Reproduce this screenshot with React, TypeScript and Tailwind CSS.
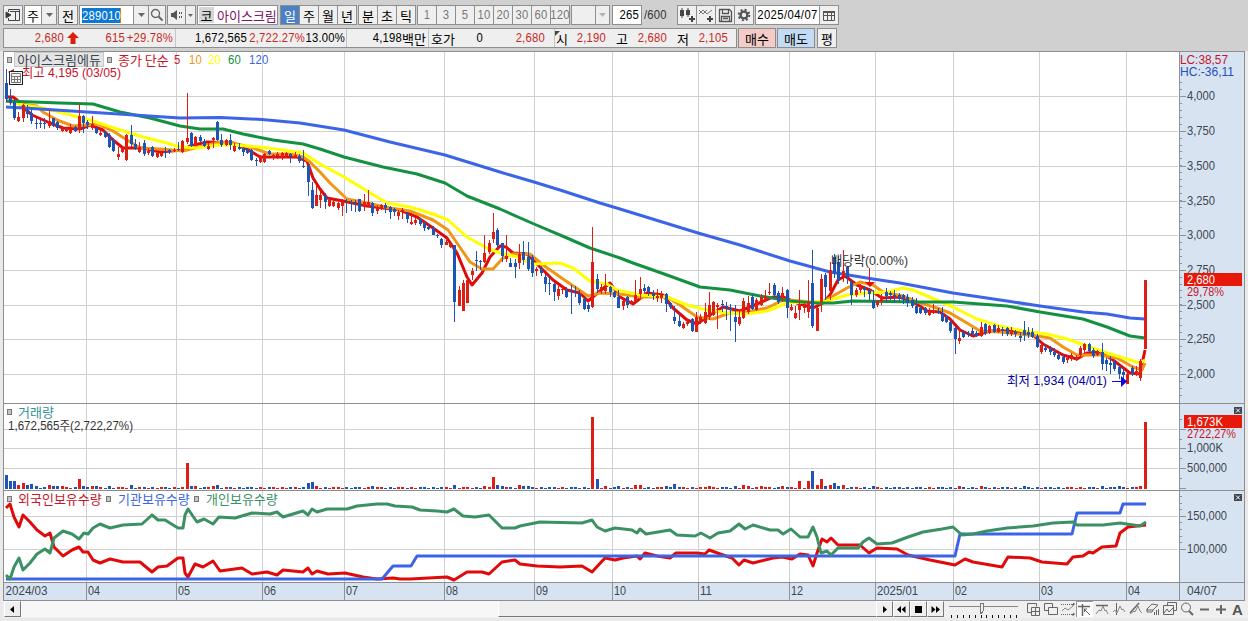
import type { ReactNode } from "react";

const UP = "#dc1e14";
const DOWN = "#1e55b4";

// one entry per trading day: direction, high, body top, body bottom, low (plot pixels)
const CANDLES = `
d69,83,99,102 d89,98,103,105 d100,102,118,120 u112,117,121,122 u104,105,118,122 d105,110,114,118 d110,113,121,124 d118,123,124,129
d120,123,124,128 d118,123,124,129 u110,121,126,128 d118,118,126,127 d121,122,128,130 u126,129,131,132 u127,128,131,132 u124,129,133,134
d126,127,131,132 u104,116,130,133 d115,116,123,133 d120,122,125,129 u116,124,128,130 d127,128,133,134 u130,133,135,136 d131,132,137,138
d133,135,147,148 d138,140,151,152 u147,154,157,160 u147,148,152,153 u134,135,160,161 d125,135,144,147 d139,144,149,150 u142,147,152,153
d140,143,154,156 u148,151,153,155 d146,147,156,157 u152,153,157,158 u151,153,156,157 d147,152,153,158 d149,150,152,154 u148,150,151,152
d142,149,150,151 u140,141,152,153 u93,138,142,144 d132,133,146,147 u136,137,145,146 d135,137,141,143 d139,141,146,147 u143,146,149,150
u137,138,140,148 d121,122,140,141 d134,140,145,147 u139,140,145,146 d134,140,145,150 u143,146,151,152 d143,147,149,150 d147,148,152,156
d148,149,153,154 d149,150,160,161 d158,160,161,166 u155,156,162,163 u153,154,162,163 d150,151,154,155 u154,155,158,160 u152,154,156,159
u152,153,158,160 u152,153,156,158 d153,154,156,163 u152,155,157,158 d154,156,161,163 d150,166,167,168 d163,166,182,196 d182,190,208,209
u186,195,206,206 u190,195,200,208 d193,196,202,209 u198,200,206,207 u200,202,206,207 u202,203,208,210 u199,202,206,216 d199,201,202,213
d200,202,203,211 d200,202,203,212 d199,199,211,212 u194,202,206,211 u190,202,206,207 d202,203,213,216 u205,207,211,214 u204,205,209,210
d203,205,208,213 d206,207,212,219 d208,209,212,216 u210,212,216,220 u208,210,212,219 d212,213,219,223 u213,222,224,225 u218,220,223,225
d218,219,224,226 d222,223,228,231 d225,227,229,230 d226,228,235,235 d234,235,236,238 d238,239,245,248 u240,242,245,245 u241,243,247,248
d245,245,302,322 u286,290,306,306 u280,283,311,311 u278,280,303,303 u268,271,275,280 d251,260,261,271 d260,261,262,270 u235,253,262,263
u240,243,252,254 u213,232,239,243 d228,230,245,248 d243,243,256,262 u235,256,259,262 d258,263,267,267 d259,263,267,278 u244,254,263,269
d241,252,260,265 d242,257,269,271 d255,257,273,277 u267,269,271,276 d266,269,273,276 d274,277,284,292 d276,283,284,295 d283,284,292,301
u286,289,296,300 u285,289,290,294 d287,290,297,298 d285,291,292,314 d286,291,292,297 d290,294,303,305 d297,299,309,310 d303,305,309,312
u227,262,307,308 d274,279,289,293 u284,287,290,294 u274,288,291,294 d286,287,292,297 d291,292,297,298 d290,297,308,308 u300,301,306,310
d296,297,305,308 u300,301,303,304 u280,295,302,303 u277,289,294,298 d284,288,291,293 d286,287,292,296 d290,293,296,300 u289,296,298,302
u291,295,298,303 d293,294,304,312 d302,303,307,309 d306,317,321,324 d313,321,326,327 u322,324,328,329 u320,322,324,326 d318,319,331,332
u312,317,332,332 u314,317,322,324 u303,312,323,324 u292,305,317,320 u301,302,315,316 u303,305,307,329 d300,304,305,312 d302,306,308,320
d304,308,310,331 d305,317,322,342 u310,317,324,326 u298,301,318,319 u296,303,312,314 d295,297,309,310 u298,300,310,311 u294,297,305,306
u290,296,301,302 u283,292,293,295 d283,285,295,298 d291,293,302,304 u287,293,298,302 d289,290,308,318 u304,307,310,311 u306,313,318,319
u290,304,310,320 u303,306,308,313 u280,302,312,318 d250,283,326,328 u307,308,331,331 u274,279,302,312 d273,275,287,300 u262,270,291,300
d254,257,273,278 d256,262,281,284 u250,271,276,282 d266,267,277,284 d280,282,295,305 u288,290,295,297 u284,285,290,293 d286,288,290,297
d288,290,294,300 d290,301,308,309 u300,301,305,307 u294,296,302,305 d288,292,296,302 d291,293,295,300 d290,295,296,303 d293,295,299,301
d294,295,299,304 d294,297,303,307 d297,300,306,308 d298,306,313,314 d306,308,313,314 d307,308,313,315 u308,311,315,316 u304,310,313,314
d308,311,313,314 d307,313,321,322 d315,317,322,323 d320,322,331,333 d327,328,339,354 u328,338,341,344 d330,332,337,338 d331,333,335,337
d328,331,334,336 d331,333,336,337 u322,327,336,337 d323,324,333,335 u325,326,333,334 d324,325,332,333 u325,328,332,333 d327,329,331,336
d327,328,334,336 u327,330,334,336 d330,332,334,337 d332,336,338,342 d321,330,335,341 d327,332,335,338 d328,332,337,338 d334,336,347,348
u344,345,352,354 d344,348,350,352 d346,349,352,355 d348,352,355,357 d353,355,359,360 d355,357,362,364 u355,358,360,363 u353,355,359,361
u355,357,360,361 u346,348,355,357 u343,344,350,354 d343,344,351,352 d348,350,356,358 u350,351,355,356 d343,352,364,370 d358,360,364,371
d356,363,365,374 d360,362,369,371 d365,367,374,379 d368,372,375,384 u370,374,384,384 d366,368,373,376 u366,371,375,376 u359,361,378,381
u280,280,349,349`
  .trim()
  .split(/\s+/)
  .map((entry) => {
    const [high, top, bottom, low] = entry.slice(1).split(",").map(Number);
    return { color: entry[0] === "u" ? UP : DOWN, high, top, bottom, low };
  });

const VOLUME: Record<number, number> = {
  0: 14, 1: 8, 2: 8, 3: 4, 4: 6, 5: 4, 6: 5, 7: 3, 10: 4, 11: 3, 12: 3, 13: 3, 17: 10, 18: 3, 20: 3, 21: 3, 24: 3, 29: 4,
  42: 26, 43: 3, 44: 3, 48: 3, 49: 4, 70: 6, 71: 7, 72: 3, 85: 3, 104: 4, 111: 3, 113: 12, 114: 4, 115: 3, 119: 4, 120: 3,
  121: 3, 136: 72, 137: 10, 139: 3, 142: 3, 146: 4, 147: 4, 153: 3, 155: 5, 163: 3, 169: 3, 171: 4, 172: 3, 175: 3, 180: 3,
  184: 8, 186: 8, 187: 18, 188: 4, 189: 10, 190: 3, 191: 4, 192: 6, 193: 3, 194: 4, 201: 3, 221: 3, 226: 3, 236: 3, 254: 3,
  258: 3, 263: 3, 264: 67,
};

const MA5 =
  "6,98 8,97 13,97 17,100 24,108 32,115 50,123 63,128 80,129 90,125 103,130 113,140 123,148 143,148 160,152 183,150 190,146 207,142 233,143 247,149 260,157 277,157 297,157 307,161 313,178 320,189 327,198 343,201 367,206 400,210 417,217 433,228 447,238 457,253 467,277 472,285 482,273 490,257 500,246 506,247 513,253 527,254 540,267 553,280 567,290 580,293 588,301 600,291 610,283 620,297 633,304 647,293 663,295 673,308 687,320 697,324 710,315 723,307 740,311 757,304 773,297 783,297 797,303 813,308 823,303 830,295 838,280 845,276 857,285 870,290 882,298 900,297 917,304 927,311 940,312 950,319 960,330 973,336 990,331 1013,331 1033,335 1043,344 1063,355 1077,359 1087,353 1100,352 1113,360 1130,373 1140,374 1145,350";
const MA10 =
  "6,101 20,104 37,106 43,112 57,120 73,126 97,124 113,131 127,140 140,148 160,149 183,151 203,146 220,142 233,143 253,148 270,154 290,154 303,157 310,162 320,172 330,183 347,199 367,203 390,208 410,211 433,220 448,230 457,243 470,262 482,269 493,269 503,258 513,254 530,254 543,265 563,279 588,296 600,293 620,294 640,297 667,297 680,305 697,317 713,319 730,313 747,312 767,308 783,300 800,301 820,303 833,296 847,288 860,282 873,285 883,292 903,296 917,302 937,308 950,313 967,323 980,331 1000,332 1037,336 1050,338 1063,347 1077,355 1100,355 1117,358 1133,367 1142,370 1145,363";
const MA20 =
  "8,101 23,105 43,108 67,114 93,121 117,129 143,137 167,143 180,147 197,148 217,145 233,145 260,147 283,150 303,153 320,164 344,177 367,191 387,203 410,207 433,214 448,220 467,237 487,248 500,253 517,257 533,264 560,263 573,268 590,281 607,284 617,290 640,295 667,297 687,305 703,309 727,313 747,314 767,311 787,303 807,302 827,301 847,295 867,293 887,292 903,288 913,290 927,296 953,307 977,319 1000,326 1023,331 1047,334 1067,339 1087,346 1107,353 1127,359 1140,363 1145,360";
const MA60 =
  "6,101 33,102 60,103 93,104 120,112 150,118 180,126 200,129 223,129 243,134 273,140 303,144 320,149 344,157 383,167 417,174 445,183 467,196 500,209 534,224 567,238 590,248 620,258 633,263 667,275 700,287 730,290 760,296 790,301 817,303 833,303 853,301 920,302 953,302 1007,306 1040,312 1083,319 1107,327 1130,336 1145,338";
const MA120 =
  "6,107 40,109 87,112 134,115 180,118 220,117.5 262,119.5 300,123 344,130 390,142 445,155 500,172 534,182 560,190 600,203 620,209 698,233 740,245 790,261 830,272 873,279 900,283 953,293 1007,301 1040,306 1083,312 1107,314 1130,318 1145,319";

const FOREIGN =
  "6,508 10,504 14,517 19,527 23,515 30,522 37,530 45,536 50,533 54,547 63,556 72,550 79,547 83,552 88,552 93,560 100,563 110,559 123,562 140,562 152,572 158,567 167,566 178,558 183,558 185,573 188,577 195,564 203,567 213,561 220,571 242,568 252,574 267,572 277,575 283,570 303,572 308,568 312,574 317,571 328,574 345,573 363,577 377,579 393,578 400,579 410,579 447,577 454,580 467,572 482,572 489,574 502,562 515,560 520,564 537,566 560,567 582,566 592,572 605,558 615,560 623,558 637,556 640,559 645,553 657,556 670,558 676,553 697,553 705,554 709,550 723,555 732,558 739,565 744,560 753,563 773,558 782,557 792,559 800,554 808,555 813,566 817,553 822,539 827,542 831,538 838,545 860,545 869,553 877,548 897,549 908,555 930,560 955,565 965,559 973,562 1002,567 1008,557 1030,558 1042,562 1067,564 1073,557 1083,556 1089,552 1093,553 1102,547 1116,546 1120,533 1128,527 1146,525";
const INSTITUTION =
  "6,579 382,579 393,566 411,566 417,556 955,556 960,534 1072,534 1077,513 1120,513 1123,504 1146,504";
const PERSONAL =
  "6,575 10,579 14,567 19,558 23,570 30,563 37,554 45,549 50,553 54,538 63,531 72,534 79,539 84,533 88,534 93,528 100,524 110,528 123,525 142,524 152,515 158,520 165,520 178,528 183,528 185,515 188,509 197,522 204,519 213,524 219,517 235,518 252,513 270,514 277,512 283,517 303,511 308,515 312,509 317,512 327,509 347,509 357,506 377,504 387,504 395,506 412,507 420,510 437,511 447,512 454,509 463,516 475,517 489,515 502,528 515,528 520,526 530,524 540,522 582,523 592,520 597,527 605,531 615,528 632,530 637,533 640,529 646,534 670,530 677,535 695,536 701,533 710,538 718,533 730,531 739,524 745,529 753,525 770,530 778,530 783,534 791,529 800,537 808,537 813,527 817,537 821,553 827,551 831,555 838,548 858,548 863,542 869,538 877,544 892,543 908,537 923,532 942,529 953,527 962,535 973,534 987,531 1007,528 1033,526 1053,523 1073,522 1077,525 1103,525 1120,523 1140,526 1146,522";

const MONTHS: [number, string, number][] = [
  [4, "2024/03", 42],
  [86, "04", 12],
  [176, "05", 12],
  [262, "06", 12],
  [344, "07", 12],
  [444, "08", 12],
  [534, "09", 12],
  [612, "10", 12],
  [698, "11", 12],
  [789, "12", 12],
  [875, "2025/01", 41],
  [953, "02", 12],
  [1039, "03", 12],
  [1126, "04", 12],
];

const candleX = (i: number) => Math.floor(6 + i * 4.315);

function Label({ x, y, w, fill = "#3c4650", children }: { x: number; y: number; w: number; fill?: string; children: string }) {
  return (
    <text x={x} y={y} fill={fill} textLength={w} lengthAdjust="spacingAndGlyphs" className="font-['Liberation_Sans','Noto_Sans_CJK_KR',sans-serif] text-[13px]">
      {children}
    </text>
  );
}

function Line({ points, color }: { points: string; color: string }) {
  return <polyline points={points} fill="none" stroke={color} strokeWidth="3" strokeLinejoin="round" />;
}

function Grid({ top, bottom, rows }: { top: number; bottom: number; rows: number[] }) {
  return (
    <g fill="#d0d0d0" shapeRendering="crispEdges">
      {MONTHS.slice(1).map(([x]) => (
        <rect key={x} x={x} y={top} width="1" height={bottom - top} />
      ))}
      {rows.map((y) => (
        <rect key={y} x="4" y={y} width="1174" height="1" />
      ))}
    </g>
  );
}

function Ticks({ from, to, step, majors }: { from: number; to: number; step: number; majors: number[] }) {
  const minors: number[] = [];
  for (let y = from; y <= to; y += step) minors.push(Math.round(y));
  return (
    <g fill="#8b939b" shapeRendering="crispEdges">
      {minors.map((y) => (
        <rect key={y} x="1180" y={y} width="2" height="1" />
      ))}
      {majors.map((y) => (
        <rect key={y} x="1180" y={y} width="6" height="1" />
      ))}
    </g>
  );
}

function CloseMark({ y }: { y: number }) {
  return (
    <g>
      <rect x="1234" y={y} width="8" height="7" fill="#3f4650" />
      <path d={`M1236 ${y + 1.5}l4 4m0-4l-4 4`} stroke="#fff" strokeWidth="1" />
    </g>
  );
}

function Marker() {
  return <i className="block h-[6px] w-[5px] border border-[#777] bg-[#c4c4c4]" />;
}

function Ko({ className = "", children }: { className?: string; children: ReactNode }) {
  return <span className={`font-['Noto_Sans_CJK_KR',sans-serif] text-[13px] leading-none whitespace-nowrap ${className}`}>{children}</span>;
}

function Num({ className = "", children }: { className?: string; children: ReactNode }) {
  return (
    <span className={`scale-y-[1.15] font-['Liberation_Sans',sans-serif] text-[11.3px] leading-none tracking-[0.2px] whitespace-nowrap ${className}`}>{children}</span>
  );
}

function Cell({ className = "", children }: { className?: string; children?: ReactNode }) {
  return <div className={`flex h-5 shrink-0 items-center justify-center border border-[#8e8e8e] ${className}`}>{children}</div>;
}

function Caret({ className = "text-[#666]" }: { className?: string }) {
  return (
    <svg width="7" height="4" className={className}>
      <path d="M0 0h7L3.500 4z" fill="currentColor" />
    </svg>
  );
}

function Toolbar() {
  return (
    <div className="flex h-[28px] shrink-0 items-start pt-[5px] pl-[3px]">
      <Cell className="mr-[1px] w-5 bg-[#efefef]">
        <svg width="16" height="14" viewBox="0 0 16 14" fill="none" stroke="#444">
          <path d="M3.500 4V1.500h11v11h-11V10M5 3.500h9M10.500 4v8" />
          <path d="M1 4l5 3-5 3z" fill="#333" />
        </svg>
      </Cell>
      <Cell className="w-[18px] bg-white"><Ko>주</Ko></Cell>
      <Cell className="mr-[1px] -ml-px w-[16px] bg-[#efefef]"><Caret /></Cell>
      <Cell className="mr-[1px] w-5 bg-[#efefef]"><Ko>전</Ko></Cell>
      <Cell className="w-[55px] justify-start bg-white pl-[2px]">
        <Num className="h-[13px] w-[39px] border-r border-[#d0772c] bg-[#0a78d7] pt-px text-white">289010</Num>
      </Cell>
      <Cell className="-ml-px w-[16px] bg-[#efefef]"><Caret /></Cell>
      <Cell className="mr-[1px] -ml-px w-[18px] bg-[#efefef]">
        <svg width="14" height="14" viewBox="0 0 14 14" fill="none" stroke="#666">
          <circle cx="5.500" cy="5.500" r="4" strokeWidth="1.400" />
          <path d="M8.500 8.500l4 4" strokeWidth="2" />
        </svg>
      </Cell>
      <Cell className="w-[19px] bg-[#efefef]">
        <svg width="14" height="12" viewBox="0 0 14 12" fill="#555">
          <path d="M1 4h2l4-3v10L3 8H1z" />
          <path d="M9 3h1v2H9zM11 3h1v2h-1zM9 7h1v2H9zM11 7h1v2h-1z" />
        </svg>
      </Cell>
      <Cell className="mr-[1px] -ml-px w-[11px] bg-[#efefef]"><svg width="5" height="3"><path d="M0 0h5L2.500 3z" fill="#666" /></svg></Cell>
      <Cell className="mr-[2px] w-[81px] justify-start overflow-hidden bg-white pl-px">
        <Ko className="flex h-[16px] w-[15px] items-center justify-center bg-[#d6d6d6]">코</Ko>
        <Ko className="pl-[3px] text-[#7c1464]">아이스크림</Ko>
      </Cell>
      <Cell className="w-[20px] border-[#4a80c4] bg-[#4a80c4] text-white"><Ko>일</Ko></Cell>
      <Cell className="-ml-px w-[20px] bg-[#efefef]"><Ko>주</Ko></Cell>
      <Cell className="-ml-px w-[20px] bg-[#efefef]"><Ko>월</Ko></Cell>
      <Cell className="mr-[1px] -ml-px w-[20px] bg-[#efefef]"><Ko>년</Ko></Cell>
      <Cell className="w-[20px] bg-[#efefef]"><Ko>분</Ko></Cell>
      <Cell className="-ml-px w-[20px] bg-[#efefef]"><Ko>초</Ko></Cell>
      <Cell className="mr-[1px] -ml-px w-[20px] bg-[#efefef]"><Ko>틱</Ko></Cell>
      {["1", "3", "5", "10", "20", "30", "60", "120"].map((n) => (
        <Cell key={n} className="-mr-px w-[20px] bg-[#efefef] text-[#777]"><Num>{n}</Num></Cell>
      ))}
      <Cell className="ml-[2px] w-[25px] bg-[#efefef]" />
      <Cell className="mr-[2px] -ml-px w-[15px] bg-[#efefef]"><Caret className="text-[#b4b4b4]" /></Cell>
      <Cell className="w-[30px] justify-end bg-white pr-[2px]"><Num>265</Num></Cell>
      <div className="flex h-5 w-[35px] items-center pl-[2px] text-[#333]"><Num>/600</Num></div>
      <Cell className="w-[20px] bg-[#efefef]">
        <svg width="16" height="16" viewBox="0 0 16 16" fill="#444">
          <path d="M1 3h4v6H1zM2.500 1h1v10h-1zM7 3h4v5H7zM8.500 1h1v9h-1zM10 11h2V9h2v2h2v2h-2v2h-2v-2h-2z" />
        </svg>
      </Cell>
      <Cell className="-ml-px w-[20px] bg-[#efefef]">
        <svg width="16" height="16" viewBox="0 0 16 16" fill="none" stroke="#777">
          <path d="M1 7l4-4 4 4 5-4M1 3l4 4 4-4" />
          <path d="M9 12h6M12 9v6" strokeWidth="2" stroke="#444" />
        </svg>
      </Cell>
      <Cell className="-ml-px w-[20px] bg-[#efefef]">
        <svg width="15" height="15" viewBox="0 0 15 15" fill="none" stroke="#555" strokeWidth="1.300">
          <path d="M1.500 1.500h10l2 2v10h-12zM4.500 1.500v4h6v-4M3.500 13.500v-5h8v5M5 10.500h5" />
        </svg>
      </Cell>
      <Cell className="mr-[1px] -ml-px w-[20px] bg-[#efefef]">
        <svg width="14" height="14" viewBox="0 0 14 14" fill="none" stroke="#555">
          <circle cx="7" cy="7" r="3.400" strokeWidth="2.400" />
          <circle cx="7" cy="7" r="5.300" strokeWidth="2" strokeDasharray="2 2.160" />
        </svg>
      </Cell>
      <Cell className="w-[65px] bg-white"><Num className="tracking-[0.4px]">2025/04/07</Num></Cell>
      <Cell className="-ml-px w-[20px] bg-[#efefef]">
        <svg width="12" height="11" viewBox="0 0 12 11" fill="none" stroke="#555">
          <path d="M.5 1.500h11v9H.5zM.5 5.500h11M4.500 3v7M8.500 3v7" />
          <path d="M0 2h12" strokeWidth="2" />
        </svg>
      </Cell>
    </div>
  );
}

function QuoteRow() {
  return (
    <div className="flex h-[23px] shrink-0 items-start pl-[3px]">
      <div className="flex h-5 w-[734px] items-center border border-[#8e8e8e] bg-[#efefef] text-black">
        <div className="flex h-full w-[172px] items-center border-r border-[#c4c4c4] text-[#c8281e]">
          <Num className="w-[60px] text-right">2,680</Num>
          <svg width="12" height="12" viewBox="0 0 12 12" className="ml-[3px]">
            <path d="M6 0l6 6H8.500v6h-5V6H0z" fill="#dc1e0a" />
          </svg>
          <Num className="w-[46px] text-right">615</Num>
          <Num className="w-[48px] text-right">+29.78%</Num>
        </div>
        <div className="flex h-full w-[171px] items-center border-r border-[#c4c4c4]">
          <Num className="w-[71px] text-right">1,672,565</Num>
          <Num className="w-[58px] text-right text-[#c8281e]">2,722.27%</Num>
          <Num className="w-[40px] text-right">13.00%</Num>
        </div>
        <div className="flex h-full w-[82px] items-center border-r border-[#c4c4c4]">
          <Num className="w-[55px] text-right">4,198</Num>
          <Ko>백만</Ko>
        </div>
        <div className="flex h-full w-[126px] items-center border-r border-[#c4c4c4]">
          <Ko className="pl-[2px]">호가</Ko>
          <Num className="w-[28px] text-right">0</Num>
          <Num className="w-[62px] text-right text-[#c8281e]">2,680</Num>
        </div>
        <div className="relative flex h-full items-center">
          <svg width="5" height="5" className="absolute top-[2px] left-0"><path d="M0 0h5L0 5z" fill="#444" /></svg>
          <Ko className="pl-px">시</Ko>
          <Num className="w-[38px] text-right text-[#c8281e]">2,190</Num>
          <Ko className="pl-[10px]">고</Ko>
          <Num className="w-[39px] text-right text-[#c8281e]">2,680</Num>
          <Ko className="pl-[10px]">저</Ko>
          <Num className="w-[39px] text-right text-[#c8281e]">2,105</Num>
        </div>
      </div>
      <Cell className="ml-[1px] w-[38px] bg-[#f5cbc8]"><Ko>매수</Ko></Cell>
      <Cell className="ml-[1px] w-[38px] bg-[#c3dcf5]"><Ko>매도</Ko></Cell>
      <Cell className="ml-[2px] w-[20px] bg-[#efefef]"><Ko>평</Ko></Cell>
    </div>
  );
}

function AxisColumn({ top, height, children }: { top: number; height: number; children: ReactNode }) {
  return (
    <div className="w-[65px] shrink-0 border-l border-[#8b939b] bg-[#d7e3f1]">
      <svg width="64" height={height} viewBox={`1180 ${top} 64 ${height}`} className="block">
        {children}
      </svg>
    </div>
  );
}

function PricePanel() {
  const labels = ["4,000", "3,750", "3,500", "3,250", "3,000", "2,750", "2,500", "2,250", "2,000"];
  const rows = [96, 131, 166, 201, 235, 270, 305, 339, 374];
  return (
    <div className="relative flex h-[352px] border-b border-[#8e8e8e]">
      <svg width="1175" height="351" viewBox="4 52 1175 351" className="bg-white">
        <Grid top={52} bottom={403} rows={rows} />
        <Line points={MA5} color="#e10a0a" />
        <Line points={MA10} color="#f09614" />
        <Line points={MA20} color="#ffff00" />
        <Line points={MA60} color="#149140" />
        <Line points={MA120} color="#3c64e6" />
        <g shapeRendering="crispEdges">
          {CANDLES.map((c, i) => (
            <g key={i} fill={c.color}>
              <rect x={candleX(i)} y={c.high} width="1" height={c.low - c.high} />
              <rect x={candleX(i) - 1} y={c.top} width="3" height={Math.max(c.bottom - c.top, 1)} />
            </g>
          ))}
          <rect x="869" y="268" width="1" height="14" fill={UP} />
        </g>
        <path d="M865 282h10l-5 5z" fill="#e10a0a" />
        <Label x={831} y={265} w={77} fill="#333">배당락(0.00%)</Label>
        <Label x={1007} y={385} w={100} fill="#0000a0">최저 1,934 (04/01)</Label>
        <path d="M1112 381h9v-5l6 5.500-6 5.500v-5h-9z" fill="#0a0adc" />
        <path d="M8 72l6-3v6z" fill="#e10a0a" />
        <Label x={22} y={77} w={99} fill="#c81428">최고 4,195 (03/05)</Label>
        <rect x="9.500" y="71.500" width="13" height="13" fill="#f4f4f4" stroke="#222" />
        <path d="M11.500 73.500h9v9h-9zM11.500 76.500h9M11.500 79.500h9M14.500 76v6M17.500 76v6" fill="none" stroke="#777" />
      </svg>
      <div className="absolute top-0 left-[3px] flex items-center">
        <Marker />
        <Ko className="ml-[2px] flex h-[15px] w-[90px] items-center justify-center border border-[#c8c8c8] bg-[#e4e4e4] text-[12.9px] text-[#3c4650]">아이스크림에듀</Ko>
        <span className="ml-[3px]"><Marker /></span>
        <Ko className="ml-[6px] w-[53px] text-[#c81428]">종가 단순</Ko>
        <Num className="ml-[3px] w-[15px] text-[#c81428]">5</Num>
        <Num className="w-[19px] text-[#f09614]">10</Num>
        <Num className="w-[20px] text-[#ffff00]">20</Num>
        <Num className="w-[21px] text-[#149140]">60</Num>
        <Num className="text-[#3c64e6]">120</Num>
      </div>
      <AxisColumn top={52} height={351}>
        <Ticks from={82} to={400} step={6.95} majors={rows} />
        <Label x={1180} y={64} w={48} fill="#c81428">LC:38,57</Label>
        <Label x={1180} y={76} w={54} fill="#1e50be">HC:-36,11</Label>
        {labels.map((t, i) => (
          <Label key={t} x={1187} y={rows[i] + 4} w={28}>{t}</Label>
        ))}
        <rect x="1184" y="273" width="58" height="13" fill="#e6190a" />
        <Label x={1187} y={284} w={28} fill="#fff">2,680</Label>
        <Label x={1187} y={296} w={37} fill="#c81428">29,78%</Label>
      </AxisColumn>
    </div>
  );
}

function VolumePanel() {
  return (
    <div className="relative flex h-[87px] border-b border-[#8e8e8e]">
      <svg width="1175" height="86" viewBox="4 404 1175 86" className="bg-white">
        <Grid top={404} bottom={490} rows={[429, 448, 468]} />
        <g shapeRendering="crispEdges">
          {CANDLES.map((c, i) => {
            const h = VOLUME[i] ?? ((i * 7) % 5 < 2 ? 1 : 2);
            return <rect key={i} x={candleX(i) - 1} y={489 - h} width="3" height={h} fill={c.color} />;
          })}
        </g>
        <Label x={8} y={430} w={125} fill="#333">1,672,565주(2,722,27%)</Label>
      </svg>
      <div className="absolute top-[1px] left-[3px] flex items-center">
        <Marker />
        <Ko className="ml-[6px] text-[#329196]">거래량</Ko>
      </div>
      <AxisColumn top={404} height={86}>
        <Ticks from={419} to={489} step={9.8} majors={[429, 448, 468, 488]} />
        <Label x={1187} y={438} w={49} fill="#c81428">2722,27%</Label>
        <rect x="1184" y="415" width="58" height="13" fill="#e6190a" />
        <Label x={1187} y={426} w={36} fill="#fff">1,673K</Label>
        <Label x={1187} y={452} w={36}>1,000K</Label>
        <Label x={1187} y={472} w={40}>500,000</Label>
        <CloseMark y={407} />
      </AxisColumn>
    </div>
  );
}

function HoldingsPanel() {
  return (
    <div className="relative flex h-[92px] border-b border-[#8e8e8e]">
      <svg width="1175" height="91" viewBox="4 491 1175 91" className="bg-white">
        <Grid top={491} bottom={582} rows={[516, 549]} />
        <Line points={FOREIGN} color="#e10a0a" />
        <Line points={INSTITUTION} color="#3c64e6" />
        <Line points={PERSONAL} color="#3c9164" />
      </svg>
      <div className="absolute top-[1px] left-[3px] flex items-center">
        <Marker />
        <Ko className="ml-[6px] w-[84px] text-[#c81428]">외국인보유수량</Ko>
        <span className="ml-[4px]"><Marker /></span>
        <Ko className="ml-[7px] w-[72px] text-[#3c64e6]">기관보유수량</Ko>
        <span className="ml-[4px]"><Marker /></span>
        <Ko className="ml-[7px] text-[#3c9164]">개인보유수량</Ko>
      </div>
      <AxisColumn top={491} height={91}>
        <Ticks from={496} to={549} step={6.6} majors={[516, 549]} />
        <Label x={1187} y={520} w={40}>150,000</Label>
        <Label x={1187} y={553} w={40}>100,000</Label>
        <CloseMark y={494} />
      </AxisColumn>
    </div>
  );
}

function DateAxis() {
  return (
    <div className="border-b border-[#8e8e8e] bg-[#d7e3f1]">
      <svg width="1240" height="17" viewBox="4 583 1240 17" className="block">
        {MONTHS.map(([x, t, w]) => (
          <g key={x}>
            {x > 4 && <rect x={x} y="583" width="1" height="17" fill="#8b939b" shapeRendering="crispEdges" />}
            <Label x={x + (x > 4 ? 2 : 1.5)} y={595} w={w}>{t}</Label>
          </g>
        ))}
        <rect x="1179" y="583" width="1" height="17" fill="#8b939b" shapeRendering="crispEdges" />
        <Label x={1187} y={595} w={30}>04/07</Label>
      </svg>
    </div>
  );
}

function PlayButton({ children }: { children: ReactNode }) {
  return (
    <div className="flex h-4 w-[17px] items-center justify-center border border-t-white border-r-[#777] border-b-[#777] border-l-white bg-[#efefef]">
      <svg width="11" height="9" viewBox="0 0 11 9" fill="#000">{children}</svg>
    </div>
  );
}

function Tool({ active = false, children }: { active?: boolean; children: ReactNode }) {
  return (
    <div className={`flex h-4 w-[17px] items-center justify-center ${active ? "border-t border-l border-[#999] bg-white" : ""}`}>
      <svg width="14" height="14" viewBox="0 0 14 14" fill="none" stroke="#666">{children}</svg>
    </div>
  );
}

function BottomBar() {
  return (
    <div className="flex h-[17px] items-start">
      <PlayButton><path d="M7 1v7L3 4.500z" /></PlayButton>
      <div className="h-4 w-[477px] bg-[#f7f7f7]" />
      <div className="h-4 w-[378px] border-b border-l border-b-[#777] border-l-white bg-[#efefef]" />
      <PlayButton><path d="M4 1v7l4-3.500z" /></PlayButton>
      <PlayButton><path d="M5 1v7L1 4.500zM9.500 1v7l-4-3.500z" /></PlayButton>
      <PlayButton><path d="M2 1h7v7H2z" /></PlayButton>
      <PlayButton><path d="M1.500 1v7l4-3.500zM6 1v7l4-3.500z" /></PlayButton>
      <svg width="81" height="17" viewBox="944 601 81 17" shapeRendering="crispEdges">
        <path d="M949 606.500h69" stroke="#888" />
        <path d="M980 603h3v8l-2 3-1-3z" fill="#efefef" stroke="#777" />
        {Array.from({ length: 12 }, (_, i) => (
          <rect key={i} x={951 + i * 5.9} y="615" width="1" height="3" fill="#111" />
        ))}
      </svg>
      <div className="flex">
        <Tool><path d="M4.500 10.500h-4v-9h9v3M4.500 5.500h8v8h-8zM8.500 5.500v8M4.500 9.500h8" /></Tool>
        <Tool><path d="M.5 1.500h8v7h-8z" /><path d="M4.500 5.500h9v7h-9z" fill="#efefef" /></Tool>
        <Tool><path d="M0 2.500h14M0 12.500h14" strokeDasharray="1 1" /><path d="M1 9l3-3 3 2 5-4" stroke="#888" /><path d="M13 1l-2 2h2zM13 11l-2 2h2z" fill="#444" /></Tool>
        <Tool active><path d="M4.500 1v12M0 3.500h12" strokeWidth="1.500" /><path d="M6 6l6 6M6 6h3M6.500 6v3" /></Tool>
        <Tool><path d="M1 3.500h12" strokeWidth="1.500" /><path d="M1 12l3-4 2 1 2-5 2 5 1-1 2 4" stroke="#888" /></Tool>
        <Tool><path d="M4.500 1v12" /><path d="M1 10l2-2 2 3 3-7 2 4 1-1 2 3" stroke="#888" /></Tool>
        <Tool><path d="M1 11L10 1" strokeWidth="1.500" /><path d="M1 12l4-3 1 1 3-6 2 5 2 2" stroke="#888" /></Tool>
        <Tool><path d="M1 7l5-5 6 1-5 5H1zM1 7v3h5l1-2M8.500 13v-3M10.500 13V8M12.500 13V7" /></Tool>
        <Tool><path d="M4.500 3V.5h9v8H11" /><path d="M.5 3.500h10v9H.5zM1 11l3-4 2 3 4-4" /></Tool>
        <Tool><circle cx="6" cy="5.500" r="4.500" /><path d="M9 9l4 4" strokeWidth="2" /></Tool>
        <Tool><path d="M3 7.500h9" strokeWidth="2" /></Tool>
        <Tool><path d="M2 7.500h10M7 3v9" strokeWidth="2" /></Tool>
        <span className="w-[17px] text-center font-['Liberation_Sans',sans-serif] text-[15px] leading-[17px] font-bold text-[#555]">A</span>
      </div>
    </div>
  );
}

export default function App() {
  return (
    <div className="flex h-[621px] w-[1248px] flex-col overflow-hidden bg-[#d0d0d0]">
      <Toolbar />
      <QuoteRow />
      <div className="flex h-[570px] flex-col bg-[#e9e9e9] pl-[3px]">
        <div className="w-[1242px] border-t border-r border-l border-[#8e8e8e]">
          <PricePanel />
          <VolumePanel />
          <HoldingsPanel />
          <DateAxis />
        </div>
        <div className="bg-[#efefef] pl-px">
          <BottomBar />
        </div>
      </div>
    </div>
  );
}
